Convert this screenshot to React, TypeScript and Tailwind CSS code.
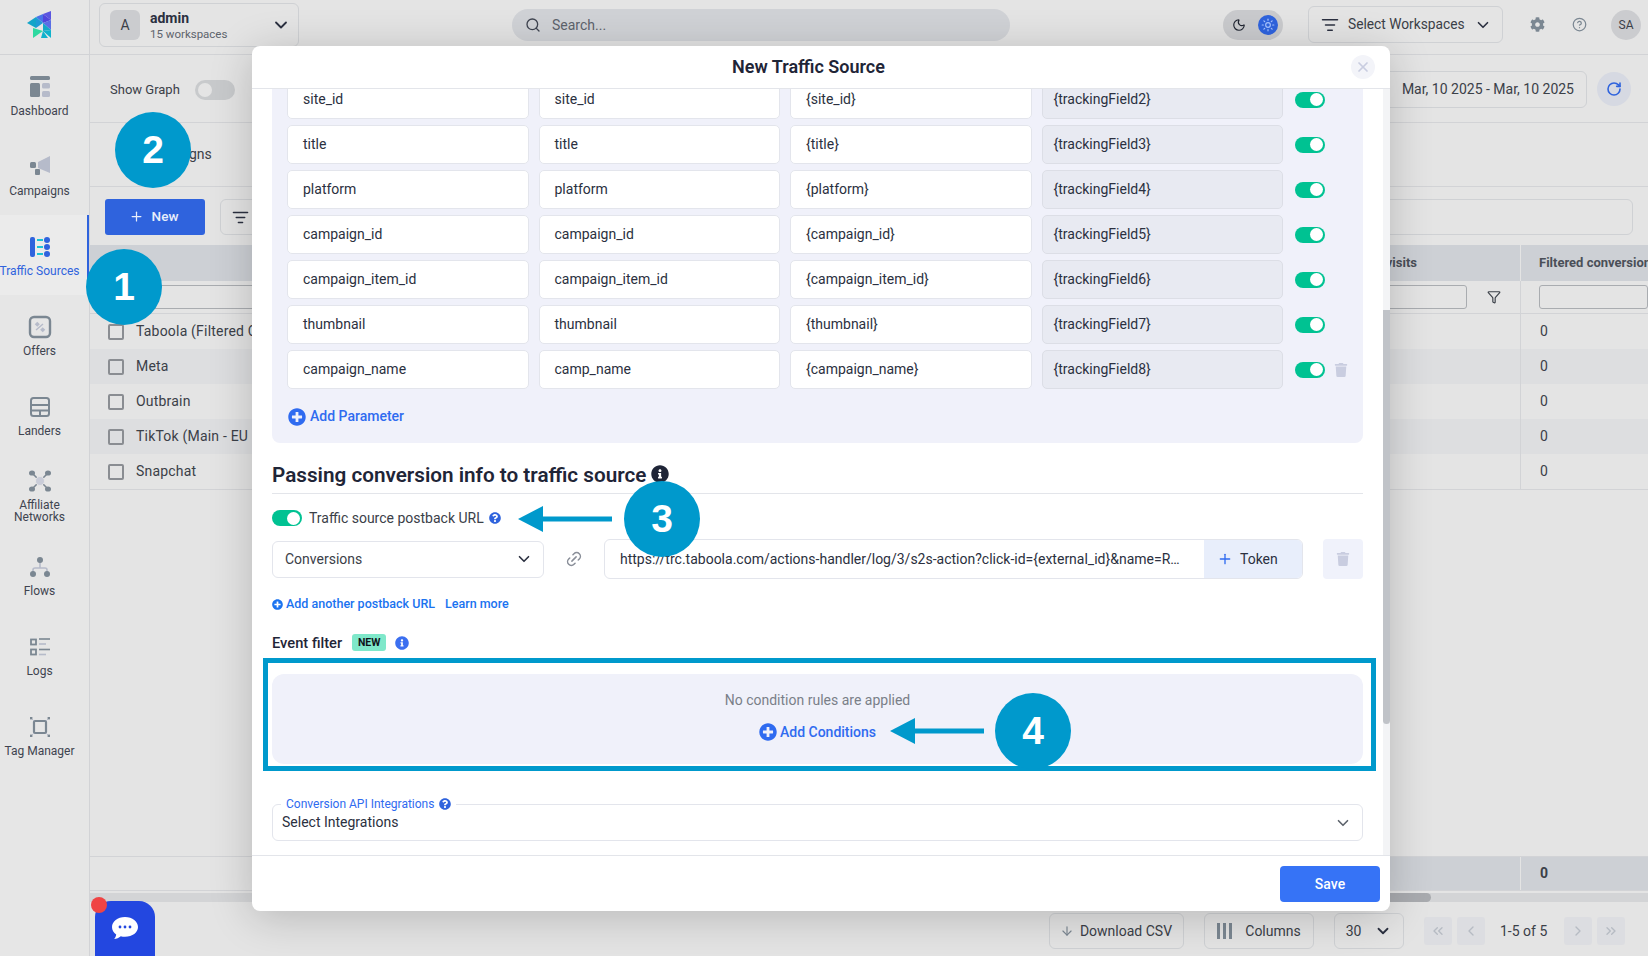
import React from "react";
import { ChevronDown, Search, Moon, Sun, Plus, X, RotateCw, ListFilter, Funnel, Link2, ArrowDown, ChevronsLeft, ChevronLeft, ChevronRight, ChevronsRight, CircleHelp } from "lucide-react";
import { FaCog, FaInfoCircle, FaQuestionCircle, FaPlusCircle, FaTrash } from "react-icons/fa";

const G = "#7b8792";
const L = "#b6bbca";

const Logo = () => (
  <svg width="28" height="28" viewBox="0 0 28 28">
    <polygon points="1,12 10,6 10,17" fill="#14a5c9" />
    <polygon points="10,6 17,3 17,12" fill="#4a73e8" />
    <polygon points="10,6 17,12 10,17" fill="#1f9ad6" />
    <polygon points="17,3 25,0 25,9" fill="#5a55e0" />
    <polygon points="17,3 25,9 17,12" fill="#5046dc" />
    <polygon points="25,9 25,19 17,12" fill="#5a6ee6" />
    <polygon points="17,12 25,19 17,20" fill="#14a8c8" />
    <polygon points="25,19 25,27 17,20" fill="#10b2cc" />
    <polygon points="7,17 17,20 7,27" fill="#2ed9a0" />
    <polygon points="17,20 22,27 15,27" fill="#10b2cc" />
  </svg>
);

const IconDashboard = () => (
  <svg width="22" height="22" viewBox="0 0 22 22">
    <rect x="1" y="0" width="20" height="4" rx="1.5" fill={G} />
    <rect x="1" y="7" width="10" height="14" rx="1.5" fill={G} />
    <rect x="13" y="7" width="8" height="5.5" rx="1.5" fill={L} />
    <rect x="13" y="15" width="8" height="6" rx="1.5" fill={L} />
  </svg>
);
const IconCampaigns = () => (
  <svg width="22" height="22" viewBox="0 0 22 22">
    <polygon points="9,6 21,0 21,17 9,12" fill={L} />
    <rect x="1" y="6" width="6" height="6" rx="1.5" fill={G} />
    <rect x="6" y="13" width="5" height="6" rx="1" fill={G} />
  </svg>
);
const IconTraffic = () => (
  <svg width="22" height="22" viewBox="0 0 22 22">
    <rect x="1" y="1" width="5" height="20" rx="2" fill="#2f63dd" />
    <rect x="8" y="3" width="6" height="2" fill="#19c3d6" />
    <rect x="8" y="10" width="6" height="2" fill="#19c3d6" />
    <rect x="8" y="17" width="6" height="2" fill="#19c3d6" />
    <circle cx="18" cy="4" r="3" fill="#2f63dd" />
    <circle cx="18" cy="11" r="3" fill="#2f63dd" />
    <circle cx="18" cy="18" r="3" fill="#2f63dd" />
  </svg>
);
const IconOffers = () => (
  <svg width="24" height="24" viewBox="0 0 24 24">
    <rect x="2" y="2" width="20" height="20" rx="4" fill="none" stroke={G} strokeWidth="2.4" />
    <line x1="8" y1="15" x2="15" y2="9" stroke={L} strokeWidth="1.4" />
    <rect x="7.5" y="7.5" width="3.6" height="3.6" fill={L} transform="rotate(45 9.300 9.300)" />
    <rect x="12.900" y="12.900" width="3.6" height="3.6" fill={L} transform="rotate(45 14.700 14.700)" />
  </svg>
);
const IconLanders = () => (
  <svg width="22" height="22" viewBox="0 0 22 22">
    <rect x="2" y="2" width="18" height="18" rx="2.5" fill="none" stroke={G} strokeWidth="2" />
    <line x1="2" y1="9" x2="20" y2="9" stroke={G} strokeWidth="2" />
    <line x1="2" y1="14.5" x2="20" y2="14.5" stroke={G} strokeWidth="2" />
    <line x1="11" y1="14.5" x2="11" y2="20" stroke={G} strokeWidth="2" />
  </svg>
);
const IconAffiliate = () => (
  <svg width="24" height="24" viewBox="0 0 24 24">
    <g stroke={G} strokeWidth="1.6">
      <line x1="4" y1="4" x2="20" y2="20" />
      <line x1="20" y1="4" x2="4" y2="20" />
    </g>
    <ellipse cx="4" cy="4" rx="3" ry="2.6" fill={G} />
    <ellipse cx="20" cy="4" rx="3" ry="2.6" fill={G} />
    <ellipse cx="4" cy="20" rx="3" ry="2.6" fill={G} />
    <ellipse cx="20" cy="20" rx="3" ry="2.6" fill={G} />
    <circle cx="12" cy="12" r="4.5" fill="#c9ccd8" stroke="#e6e6e6" strokeWidth="1" />
  </svg>
);
const IconFlows = () => (
  <svg width="22" height="22" viewBox="0 0 22 22">
    <path d="M11 6v6M4 17v-3a2 2 0 0 1 2-2h10a2 2 0 0 1 2 2v3" fill="none" stroke={L} strokeWidth="1.6" />
    <circle cx="11" cy="4" r="3" fill={G} />
    <circle cx="4" cy="18" r="3" fill={G} />
    <circle cx="18" cy="18" r="3" fill={G} />
  </svg>
);
const IconLogs = () => (
  <svg width="22" height="22" viewBox="0 0 22 22">
    <rect x="2" y="3.500" width="5" height="5" fill="none" stroke={G} strokeWidth="1.8" />
    <rect x="2" y="13.500" width="5" height="5" fill="none" stroke={G} strokeWidth="1.8" />
    <line x1="10" y1="3" x2="21" y2="3" stroke={G} strokeWidth="1.6" />
    <line x1="10" y1="8" x2="17" y2="8" stroke={L} strokeWidth="1.6" />
    <line x1="10" y1="13.500" x2="21" y2="13.500" stroke={G} strokeWidth="1.6" />
    <line x1="10" y1="18.500" x2="17" y2="18.500" stroke={L} strokeWidth="1.6" />
  </svg>
);
const IconTag = () => (
  <svg width="22" height="22" viewBox="0 0 22 22">
    <rect x="5" y="5" width="12" height="12" rx="1" fill="none" stroke={G} strokeWidth="2.2" />
    <g fill={G}>
      <rect x="1" y="1" width="2.4" height="2.4" />
      <rect x="18.6" y="1" width="2.4" height="2.4" />
      <rect x="1" y="18.6" width="2.4" height="2.4" />
      <rect x="18.6" y="18.6" width="2.4" height="2.4" />
    </g>
    <g stroke={L} strokeWidth="1">
      <line x1="3" y1="3" x2="5" y2="5" />
      <line x1="19" y1="3" x2="17" y2="5" />
      <line x1="3" y1="19" x2="5" y2="17" />
      <line x1="19" y1="19" x2="17" y2="17" />
    </g>
  </svg>
);

const nav = [
  { label: "Dashboard", icon: <IconDashboard /> },
  { label: "Campaigns", icon: <IconCampaigns /> },
  { label: "Traffic Sources", icon: <IconTraffic />, active: true },
  { label: "Offers", icon: <IconOffers /> },
  { label: "Landers", icon: <IconLanders /> },
  { label: "Affiliate Networks", icon: <IconAffiliate />, two: true },
  { label: "Flows", icon: <IconFlows /> },
  { label: "Logs", icon: <IconLogs /> },
  { label: "Tag Manager", icon: <IconTag /> },
];

const params = [
  ["site_id", "site_id", "{site_id}", "{trackingField2}"],
  ["title", "title", "{title}", "{trackingField3}"],
  ["platform", "platform", "{platform}", "{trackingField4}"],
  ["campaign_id", "campaign_id", "{campaign_id}", "{trackingField5}"],
  ["campaign_item_id", "campaign_item_id", "{campaign_item_id}", "{trackingField6}"],
  ["thumbnail", "thumbnail", "{thumbnail}", "{trackingField7}"],
  ["campaign_name", "camp_name", "{campaign_name}", "{trackingField8}"],
];

const rows = ["Taboola (Filtered Conversions)", "Meta", "Outbrain", "TikTok (Main - EU", "Snapchat"];

const Toggle = () => (
  <span className="flex h-[16px] w-[30px] shrink-0 items-center justify-end rounded-full bg-[#00c292] pr-[2px]">
    <span className="h-[13px] w-[13px] rounded-full bg-white" />
  </span>
);

const Field = ({ children, grey }: { children: React.ReactNode; grey?: boolean }) => (
  <div className={grey
    ? "flex h-[39px] w-[241.5px] shrink-0 items-center rounded-[5px] border border-[#dcdee6] bg-[#e8eaf2] pl-[11px] text-[14px] text-[#2b3040]"
    : "flex h-[39px] w-[241.5px] shrink-0 items-center rounded-[5px] border border-[#e3e5ec] bg-white pl-[15px] text-[14px] text-[#2b3040]"}>
    {children}
  </div>
);

const Bubble = ({ n, cls }: { n: string; cls: string }) => (
  <div className={`absolute flex h-[76px] w-[76px] items-center justify-center rounded-full bg-[#0099cc] font-['Liberation_Sans',sans-serif] text-[39px] font-bold text-white ${cls}`}>
    {n}
  </div>
);

const Arrow = ({ cls }: { cls: string }) => (
  <svg className={`absolute ${cls}`} width="94" height="26" viewBox="0 0 94 26">
    <polygon points="0,13 25,0 25,10.5 94,10.5 94,15.5 25,15.5 25,26" fill="#0099cc" />
  </svg>
);

export default function App() {
  return (
    <div className="relative flex h-[956px] w-[1648px] overflow-hidden bg-[#e4e4e4] font-[Roboto,sans-serif] text-[#3b4048]">
      {/* Sidebar */}
      <aside className="flex w-[90px] shrink-0 flex-col border-r border-[#d2d3d6] bg-[#e6e6e6]">
        <div className="flex h-[55px] shrink-0 items-center justify-center border-b border-[#d2d3d6] pb-[5px] pr-[10px]">
          <Logo />
        </div>
        {nav.map((n) => (
          <div
            key={n.label}
            className={n.active
              ? "flex h-[80px] shrink-0 flex-col items-center justify-center gap-[6px] border-r-2 border-[#2f63dd] bg-[#ebebeb] pr-[8px] pt-[1px] text-center text-[12px] leading-[12px] text-[#2f63dd]"
              : "flex h-[80px] shrink-0 flex-col items-center justify-center gap-[6px] pr-[10px] pt-[1px] text-center text-[12px] leading-[12px] text-[#3f4450]"}
          >
            <span className="flex h-[24px] items-center justify-center">{n.icon}</span>
            <span className={n.two ? "w-[70px]" : "whitespace-nowrap"}>{n.label}</span>
          </div>
        ))}
      </aside>

      {/* Main */}
      <div className="flex min-w-0 flex-1 flex-col">
        {/* Top bar */}
        <header className="flex h-[55px] shrink-0 border-b border-[#d2d3d6] pl-[9px] pr-[6px]">
          <div className="mt-[3px] flex h-[44px] w-[200px] items-center rounded-[6px] border border-[#cfd1d4] pl-[10px] pr-[7px]">
            <span className="flex h-[30px] w-[30px] items-center justify-center rounded-[6px] bg-[#cbcccf] text-[14px]">A</span>
            <div className="ml-[10px] mt-[2px] flex-1">
              <div className="text-[14px] font-bold leading-[16px] text-[#2b3040]">admin</div>
              <div className="mt-[1px] text-[11.5px] leading-[15px] text-[#5d636c]">15 workspaces</div>
            </div>
            <ChevronDown size={20} strokeWidth={2.2} className="text-[#2b3040]" />
          </div>
          <div className="ml-[213px] mt-[9px] flex h-[32px] w-[498px] items-center rounded-full bg-[#d0d2d6] pl-[13px] text-[14px] text-[#5d636c]">
            <Search size={16} className="mr-[11px] text-[#3f4450]" />
            Search...
          </div>
          <div className="ml-[213px] mt-[10px] flex h-[30px] w-[60px] items-center justify-between rounded-full bg-[#c9cacd] pl-[9px] pr-[5px]">
            <Moon size={14} className="text-[#1f2430]" />
            <span className="flex h-[20px] w-[20px] items-center justify-center rounded-full bg-[#2f63dd]">
              <Sun size={14} className="text-[#a9c4ff]" />
            </span>
          </div>
          <div className="ml-[25px] mt-[6px] flex h-[37px] w-[195px] items-center rounded-[6px] border border-[#cfd1d4] pl-[12px] text-[13.75px]">
            <ListFilter size={18} className="mr-[9px] text-[#2b3040]" />
            Select Workspaces
            <ChevronDown size={18} strokeWidth={2.2} className="ml-[9px] text-[#2b3040]" />
          </div>
          <FaCog size={15} className="ml-[27px] mt-[17px] text-[#7b8792]" />
          <CircleHelp size={15} className="ml-[27px] mt-[17px] text-[#7b8792]" />
          <span className="ml-[24px] mt-[10px] flex h-[30px] w-[30px] items-center justify-center rounded-full bg-[#cbcccf] text-[12px]">SA</span>
        </header>

        {/* Show graph */}
        <div className="flex h-[68px] shrink-0 items-center border-b border-[#d2d3d6] pl-[20px] pt-[2px]">
          <span className="text-[13px]">Show Graph</span>
          <span className="ml-[15px] flex h-[20px] w-[40px] items-center rounded-full bg-[#c8cacc] pl-[3px]">
            <span className="h-[14px] w-[14px] rounded-full bg-[#e4e4e4]" />
          </span>
          <div className="ml-auto mr-[61px] flex h-[37px] w-[290px] items-center justify-end rounded-[6px] border border-[#cfd1d4] pr-[12px] text-[14px]">
            Mar, 10 2025 - Mar, 10 2025
          </div>
          <span className="absolute left-[1597px] top-[72px] flex h-[34px] w-[34px] items-center justify-center rounded-full bg-[#d6d9e2]">
            <RotateCw size={16} strokeWidth={2.4} className="text-[#2f63dd]" />
          </span>
        </div>

        {/* Title row */}
        <div className="flex h-[64px] shrink-0 items-center border-b border-[#d2d3d6] pl-[51px] text-[14px]">
          Campaigns
        </div>

        {/* Toolbar */}
        <div className="flex h-[58px] shrink-0 items-start pl-[15px] pr-[15px] pt-[12px]">
          <div className="flex h-[36px] w-[100px] items-center justify-center gap-[8px] rounded-[3px] bg-[#2f63dd] pb-[2px] pr-[3px] text-[13.5px] font-medium text-[#e8eefb]">
            <Plus size={15} />
            New
          </div>
          <div className="ml-[15px] flex h-[36px] w-[40px] items-center justify-center rounded-[6px] border border-[#cfd1d4]">
            <ListFilter size={17} className="text-[#2b3040]" />
          </div>
          <div className="ml-[10px] h-[36px] flex-1 rounded-[6px] border border-[#cfd1d4]" />
        </div>

        {/* Table */}
        <div className="flex h-[36px] shrink-0 justify-between bg-[#cdd0d5] text-[13px] font-bold text-[#4a4f58]">
          <span />
          <div className="flex">
            <span className="flex w-[200px] items-center justify-end whitespace-nowrap pr-[103px]">Filtered visits</span>
            <span className="flex w-[128px] items-center overflow-hidden whitespace-nowrap border-l border-[#e4e4e4] pl-[18px]">Filtered conversions</span>
          </div>
        </div>
        <div className="flex h-[33px] shrink-0 items-center border-b border-[#d2d3d6]">
          <div className="ml-[20px] h-[24px] flex-1 rounded-[3px] border border-[#a9acb0]" />
          <Funnel size={14} className="ml-[20px] mr-[19px] text-[#3b4048]" />
          <div className="flex h-full w-[128px] items-center border-l border-[#d2d3d6] pl-[18px]">
            <span className="h-[24px] w-[120px] rounded-[3px] border border-[#a9acb0]" />
          </div>
        </div>
        <div className="flex shrink-0 flex-col border-b border-[#d2d3d6]">
          {rows.map((r, i) => (
            <div key={r} className={i % 2 === 1 ? "flex h-[35px] items-center justify-between bg-[#dddee0]" : "flex h-[35px] items-center justify-between"}>
              <div className="flex items-center whitespace-nowrap pl-[18px] text-[14px] tracking-[0.2px]">
                <span className="mr-[12px] h-[16px] w-[16px] rounded-[2px] border-2 border-[#8a8d92]" />
                {r}
              </div>
              <span className="flex h-full w-[128px] items-center border-l border-[#d2d3d6] pl-[19px] text-[14px]">0</span>
            </div>
          ))}
        </div>
        <div className="flex-1" />
        <div className="flex h-[35px] shrink-0 justify-end border-b border-t border-[#d2d3d6]">
          <div className="flex w-[400px] justify-end bg-[#cdd0d5]">
            <span className="flex w-[128px] items-center border-l border-[#e4e4e4] pl-[19px] text-[14px] font-bold">0</span>
          </div>
        </div>
        <div className="mt-[2px] h-[9px] shrink-0 bg-[#d3d4d6]">
          <div className="ml-[1240px] h-full w-[101px] rounded-full bg-[#a9abaf]" />
        </div>
        {/* Bottom bar */}
        <div className="flex h-[54px] shrink-0 items-start justify-end pr-[23px] pt-[11px] text-[14px]">
          <div className="flex h-[36px] w-[135px] items-center justify-center gap-[6px] rounded-[6px] border border-[#cfd1d4] pr-[1px]">
            <ArrowDown size={14} className="text-[#7b8792]" />
            Download CSV
          </div>
          <div className="ml-[20px] flex h-[36px] w-[110px] items-center justify-center gap-[13px] rounded-[6px] border border-[#cfd1d4]">
            <span className="flex gap-[3px]">
              <span className="h-[16px] w-[3px] bg-[#7b8792]" />
              <span className="h-[16px] w-[3px] bg-[#7b8792]" />
              <span className="h-[16px] w-[3px] bg-[#7b8792]" />
            </span>
            Columns
          </div>
          <div className="ml-[20px] flex h-[36px] w-[70px] items-center justify-center gap-[13px] rounded-[6px] border border-[#cfd1d4]">
            30
            <ChevronDown size={18} strokeWidth={2.4} className="text-[#2b3040]" />
          </div>
          <div className="ml-[20px] mt-[4px] flex items-center gap-[5px]">
            <span className="flex h-[28px] w-[28px] items-center justify-center rounded-[3px] bg-[#dcdde1]"><ChevronsLeft size={16} className="text-[#b6bbc3]" /></span>
            <span className="flex h-[28px] w-[28px] items-center justify-center rounded-[3px] bg-[#dcdde1]"><ChevronLeft size={16} className="text-[#b6bbc3]" /></span>
            <span className="mx-[10px] w-[49px] whitespace-nowrap">1-5 of 5</span>
            <span className="flex h-[28px] w-[28px] items-center justify-center rounded-[3px] bg-[#dcdde1]"><ChevronRight size={16} className="text-[#b6bbc3]" /></span>
            <span className="flex h-[28px] w-[28px] items-center justify-center rounded-[3px] bg-[#dcdde1]"><ChevronsRight size={16} className="text-[#b6bbc3]" /></span>
          </div>
        </div>
      </div>

      {/* Chat launcher */}
      <div className="absolute left-[95px] top-[901px] flex h-[55px] w-[60px] items-center justify-center rounded-t-[16px] bg-[#2347e0]">
        <svg width="30" height="28" viewBox="0 0 30 28">
          <path d="M15 2C7.5 2 2 6.6 2 12c0 3 1.6 5.6 4.2 7.4-.2 1.8-1 3.4-2.2 4.6 2.6-.2 5-1.2 6.8-2.8 1.3.4 2.7.6 4.2.6 7.5 0 13-4.4 13-9.800S22.500 2 15 2z" fill="#fff" />
          <circle cx="10" cy="12" r="1.4" fill="#2347e0" />
          <circle cx="15" cy="12" r="1.4" fill="#2347e0" />
          <circle cx="20" cy="12" r="1.4" fill="#2347e0" />
        </svg>
      </div>
      <span className="absolute left-[91px] top-[897px] h-[16px] w-[16px] rounded-full bg-[#ef4444]" />

      {/* Modal */}
      <div className="absolute left-[252px] top-[46px] flex h-[865px] w-[1138px] flex-col overflow-hidden rounded-[8px] bg-white shadow-[0_6px_44px_rgba(0,0,0,0.2)]">
        <div className="relative flex h-[43px] shrink-0 items-center justify-center border-b border-[#e3e5ea] pb-[2px] pr-[25px] text-[18px] font-semibold text-[#1f2537]">
          New Traffic Source
          <span className="absolute left-[1099px] top-[9px] flex h-[24px] w-[24px] items-center justify-center rounded-full bg-[#f3f4f9]">
            <X size={16} strokeWidth={2.6} className="text-[#c9cde0]" />
          </span>
        </div>

        <div className="flex min-h-0 flex-1">
          <div className="w-[1131px] shrink-0 overflow-hidden px-[20px]">
            <div className="-mt-[9px] rounded-b-[8px] bg-[#f0f1fa] pb-[16px] pl-[15px]">
              <div className="flex flex-col gap-[6px]">
                {params.map((p, i) => (
                  <div key={p[0]} className="flex items-center gap-[10px]">
                    <Field>{p[0]}</Field>
                    <Field>{p[1]}</Field>
                    <Field>{p[2]}</Field>
                    <Field grey>{p[3]}</Field>
                    <span className="ml-[2px]"><Toggle /></span>
                    {i === params.length - 1 && <FaTrash size={14} className="-ml-[1px] text-[#c9cde0]" />}
                  </div>
                ))}
              </div>
              <div className="mt-[17px] flex items-center gap-[4px] text-[14px] font-medium text-[#2f6bf0]">
                <FaPlusCircle size={18} className="ml-[1px]" />
                Add Parameter
              </div>
            </div>

            <div className="flex h-[51px] items-end gap-[5px] border-b border-[#e3e5ea] pb-[6px] text-[20.7px] font-semibold leading-[24px] text-[#1f2537]">
              Passing conversion info to traffic source
              <FaInfoCircle size={18} className="mb-[4px] text-[#1f2537]" />
            </div>

            <div className="mt-[16px] flex h-[16px] items-center text-[14px] text-[#3b4048]">
              <Toggle />
              <span className="ml-[7px]">Traffic source postback URL</span>
              <FaQuestionCircle size={12} className="ml-[5px] text-[#2f63dd]" />
            </div>

            <div className="mt-[13px] flex h-[40px] items-center">
              <div className="flex h-[37px] w-[272px] items-center justify-between rounded-[6px] border border-[#e3e5ec] pl-[12px] pr-[10px] text-[14px] text-[#3b4048]">
                Conversions
                <ChevronDown size={18} strokeWidth={2.2} className="text-[#2b3040]" />
              </div>
              <Link2 size={18} className="ml-[21px] mr-[21px] -rotate-45 text-[#8a8f99]" />
              <div className="flex h-[40px] w-[699px] items-center overflow-hidden rounded-[6px] border border-[#e3e5ec] text-[14px] text-[#2b3040]">
                <span className="w-[599px] shrink-0 truncate pl-[15px] pr-[22px]">https://trc.taboola.com/actions-handler/log/3/s2s-action?click-id={"{external_id}"}&amp;name=Registration</span>
                <span className="flex h-full flex-1 items-center gap-[7px] bg-[#e8eefb] pl-[13px]">
                  <Plus size={16} className="text-[#2f6bf0]" />
                  Token
                </span>
              </div>
              <span className="ml-[20px] flex h-[40px] w-[40px] items-center justify-center rounded-[4px] bg-[#f0f2fb]">
                <FaTrash size={14} className="text-[#c9cde0]" />
              </span>
            </div>

            <div className="mt-[17px] flex h-[16px] items-center text-[12.5px] font-medium text-[#1a73f0]">
              <FaPlusCircle size={11} className="mr-[3px]" />
              Add another postback URL
              <span className="ml-[10px]">Learn more</span>
            </div>

            <div className="mt-[21px] flex h-[20px] items-center text-[14.7px] font-medium text-[#1f2537]">
              Event filter
              <span className="ml-[10px] -mt-[1px] flex h-[17px] w-[34px] items-center justify-center rounded-[3px] bg-[#7fe8ca] text-[10.5px] font-bold text-[#10131a]">NEW</span>
              <FaInfoCircle size={14} className="ml-[9px] text-[#3b6ff0]" />
            </div>

            <div className="mt-[21px] flex h-[90px] flex-col items-center justify-center gap-[11px] rounded-[12px] bg-[#f0f1fa] pb-[6px]">
              <span className="text-[14px] text-[#7a7f88]">No condition rules are applied</span>
              <span className="flex items-center gap-[3px] text-[14px] font-medium text-[#2f6bf0]">
                <FaPlusCircle size={18} />
                Add Conditions
              </span>
            </div>

            <div className="relative mt-[40px] flex h-[37px] items-center justify-between rounded-[6px] border border-[#e3e5ec] pl-[9px] pr-[10px] text-[14px] text-[#2b3040]">
              <span>Select Integrations</span>
              <span className="absolute -top-[8px] left-[8px] flex items-center gap-[5px] bg-white px-[5px] text-[12px] leading-[14px] text-[#2f6bf0]">
                Conversion API Integrations
                <FaQuestionCircle size={12} className="text-[#2f63dd]" />
              </span>
              <ChevronDown size={18} strokeWidth={2.2} className="text-[#5d636c]" />
            </div>
          </div>

          <div className="w-[7px] shrink-0 bg-[#f3f4f6]">
            <div className="mt-[221px] h-[414px] rounded-b-[4px] bg-[#c0c3c8]" />
          </div>
        </div>

        <div className="flex h-[56px] shrink-0 items-start justify-end border-t border-[#e3e5ea] pr-[10px] pt-[10px]">
          <div className="flex h-[36px] w-[100px] items-center justify-center rounded-[4px] bg-[#3673f6] text-[14px] font-medium text-white">Save</div>
        </div>
      </div>

      {/* Annotations */}
      <Bubble n="1" cls="left-[86px] top-[249px]" />
      <Bubble n="2" cls="left-[115px] top-[112px]" />
      <div className="absolute left-[263px] top-[658px] h-[113px] w-[1113px] border-[5px] border-[#0099cc]" />
      <Arrow cls="left-[518px] top-[506px]" />
      <Bubble n="3" cls="left-[624px] top-[481px]" />
      <Arrow cls="left-[890px] top-[718px]" />
      <Bubble n="4" cls="left-[995px] top-[693px]" />
    </div>
  );
}
